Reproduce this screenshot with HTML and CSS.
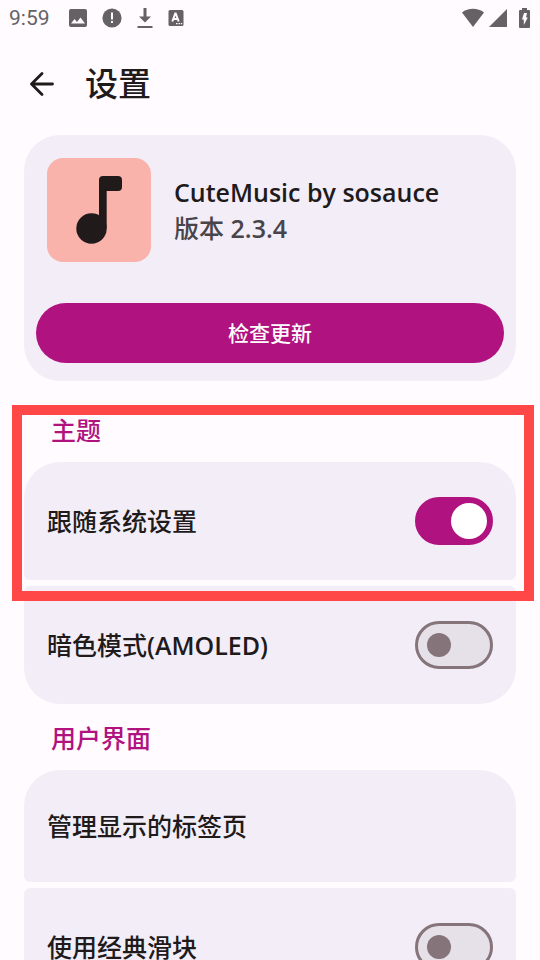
FILE: index.html
```html
<!DOCTYPE html>
<html lang="zh-CN">
<head>
<meta charset="utf-8">
<meta name="viewport" content="width=device-width, initial-scale=1">
<title>设置</title>
<link rel="stylesheet" href="styles.css">
</head>
<body>
<div class="status">
  <span class="clock">9:59</span>
  <div class="notices">
    <svg width="18" height="18" viewBox="0 0 18 18"><rect width="18" height="18" rx="2" fill="currentColor"/><path d="M2 14.500l3.500-4.500 2.500 3 3.500-4.500 4.500 6z" fill="#fffbff"/></svg>
    <svg width="20" height="20" viewBox="0 0 20 20"><circle cx="10" cy="10" r="9.600" fill="currentColor"/><path d="M9 4.500h2v7H9zM9 13h2v2H9z" fill="#fffbff"/></svg>
    <svg width="16" height="22" viewBox="0 0 16 22"><path d="M6.500 1h3v8.500H14L8 15.500 2 9.500h4.500zM.5 19h15v2H.5z" fill="currentColor"/></svg>
    <svg width="16" height="18" viewBox="0 0 16 18"><rect x=".5" y="1" width="15" height="16" rx="1.500" fill="currentColor"/><path d="M4.300 12.500L7.300 4.500h.4l3 8M5.500 10h4" fill="none" stroke="#fffbff" stroke-width="2"/><path d="M8 14h1.500v1.200H8zM10.500 14H12v1.200h-1.500zM12.800 14h1.400v1.200h-1.400z" fill="#fffbff"/></svg>
  </div>
  <div class="system">
    <svg width="22" height="20" viewBox="0 0 22 20"><path d="M0 4.500C6-.5 16-.5 22 4.500L11 19z" fill="currentColor"/></svg>
    <svg width="18" height="20" viewBox="0 0 18 20"><path d="M18 1v18H0z" fill="currentColor"/></svg>
    <svg width="11" height="20" viewBox="0 0 11 20"><path d="M3 0h5v2h2q1 0 1 1v16q0 1-1 1H1q-1 0-1-1V3q0-1 1-1h2z" fill="currentColor"/><path d="M5 5h3L7 9.500h1.800L4.800 17v-5.500H3z" fill="#fffbff"/></svg>
  </div>
</div>
<header class="topbar">
  <button class="back" type="button" aria-label="返回">
    <svg width="24" height="24" viewBox="0 0 24 24"><path d="M22.500 12H2M12 1.500L1.500 12 12 22.500" fill="none" stroke="currentColor" stroke-width="2.800" stroke-linecap="round" stroke-linejoin="round"/></svg>
  </button>
  <h1>设置</h1>
</header>
<main>
  <section class="about">
    <div class="app">
      <svg class="logo" viewBox="0 0 104 104"><rect width="104" height="104" rx="16" fill="#f9b3aa"/><circle cx="44.500" cy="70.500" r="15.200" fill="#201a1b"/><path d="M52 63V22q0-4 4-4h15q4 0 4 4v7q0 4-4 4H59.700v37.500H52z" fill="#201a1b"/></svg>
      <div>
        <h2 class="latin">CuteMusic by sosauce</h2>
        <p>版本 <span class="latin">2.3.4</span></p>
      </div>
    </div>
    <button class="update" type="button">检查更新</button>
  </section>
  <section class="group marked">
    <h3>主题</h3>
    <div class="rows">
      <label class="row"><span>跟随系统设置</span><input class="switch" type="checkbox" role="switch" checked></label>
      <label class="row"><span>暗色模式<span class="latin">(AMOLED)</span></span><input class="switch" type="checkbox" role="switch"></label>
    </div>
  </section>
  <section class="group">
    <h3>用户界面</h3>
    <div class="rows">
      <button class="row link" type="button">管理显示的标签页</button>
      <label class="row continued"><span>使用经典滑块</span><input class="switch" type="checkbox" role="switch"></label>
    </div>
  </section>
</main>
</body>
</html>
```
FILE: styles.css
```css
* {
  box-sizing: border-box;
}

body {
  margin: 0;
  height: 100vh;
  overflow: hidden;
  display: flex;
  flex-direction: column;
  background: #fffbff;
  color: #201a1b;
  font-family: "Open Sans", "Noto Sans CJK SC", sans-serif;
  font-size: 25px;
  font-weight: 500;
  line-height: 36px;
}

h1, h2, h3, p {
  margin: 0;
  font-size: 25px;
  font-weight: 500;
}

.latin {
  font-weight: 600;
}

svg {
  display: block;
  flex: none;
}

button {
  border: 0;
  padding: 0;
  background: none;
  color: inherit;
  font: inherit;
}

.status {
  flex: none;
  display: flex;
  align-items: center;
  height: 36px;
  padding: 0 10px 0 9px;
  color: #656266;
}

.clock {
  font-family: Roboto, sans-serif;
  font-size: 21px;
  font-weight: 400;
}

.notices {
  display: flex;
  align-items: center;
  gap: 15px;
  margin-left: 19px;
}

.system {
  display: flex;
  align-items: center;
  gap: 5px;
  margin-left: auto;
}

.system svg:last-child {
  margin-left: 7px;
}

.topbar {
  flex: none;
  display: flex;
  align-items: center;
  gap: 31px;
  height: 99px;
  padding: 0 30px 3px;
}

.back {
  width: 24px;
  height: 24px;
}

h1 {
  font-size: 33px;
  line-height: 48px;
}

main {
  flex: 1;
  min-height: 0;
  overflow-y: auto;
  scrollbar-width: none;
  padding: 0 24px;
}

.about {
  padding: 23px 12px 18px;
  border-radius: 36px;
  background: #f2edf7;
}

.app {
  display: flex;
  align-items: center;
  gap: 23px;
  padding: 0 11px;
}

.logo {
  width: 104px;
}

h2.latin {
  font-weight: 600;
}

.app p {
  color: #49444a;
}

.update {
  width: 100%;
  height: 60px;
  margin-top: 41px;
  border-radius: 30px;
  background: #b0127f;
  color: #fff;
  font-size: 21px;
}

.group {
  position: relative;
}

h3 {
  padding: 18px 27px 16px;
  line-height: 32px;
  color: #b0127f;
}

.marked {
  margin-top: 15px;
}

.marked::after {
  content: "";
  position: absolute;
  inset: 9px -18px 103px -12px;
  border: 10px solid #ff4747;
  pointer-events: none;
}

.rows {
  display: flex;
  flex-direction: column;
  gap: 6px;
}

.row {
  display: flex;
  align-items: center;
  justify-content: space-between;
  min-height: 118px;
  padding: 0 23px;
  border-radius: 6px;
  background: #f2edf7;
  text-align: left;
}

.row:first-child {
  border-top-left-radius: 36px;
  border-top-right-radius: 36px;
}

.row:last-child:not(.continued) {
  border-bottom-left-radius: 36px;
  border-bottom-right-radius: 36px;
}

.link {
  min-height: 112px;
}

.switch {
  appearance: none;
  display: flex;
  align-items: center;
  flex: none;
  width: 78px;
  height: 48px;
  margin: 0;
  padding: 0 9px;
  border: 3px solid #85747a;
  border-radius: 24px;
  background: #e6e1e8;
}

.switch::before {
  content: "";
  width: 24px;
  height: 24px;
  border-radius: 50%;
  background: #85747a;
}

.switch:checked {
  justify-content: flex-end;
  padding: 0 3px;
  border-color: #b0127f;
  background: #b0127f;
}

.switch:checked::before {
  width: 36px;
  height: 36px;
  background: #fff;
}
```
